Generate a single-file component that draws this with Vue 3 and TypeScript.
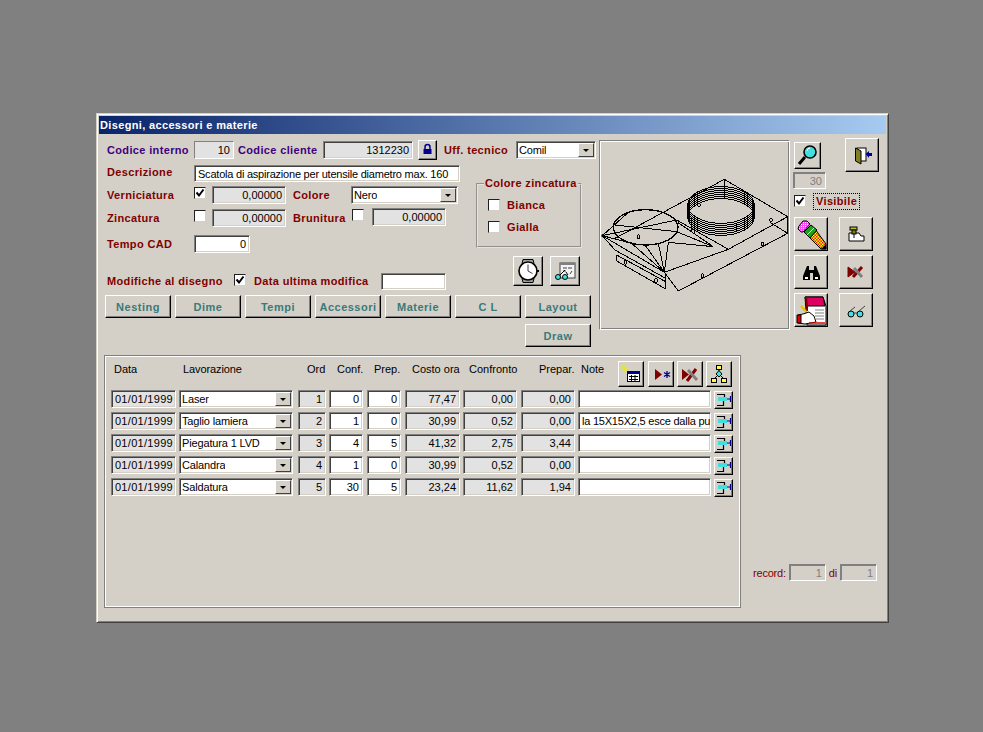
<script setup lang="ts">
interface Row {
  date: string
  work: string
  ord: number
  conf: number
  prep: number
  cost: string
  cmp: string
  prepar: string
  note: string
}
const rows: Row[] = [
  { date: '01/01/1999', work: 'Laser', ord: 1, conf: 0, prep: 0, cost: '77,47', cmp: '0,00', prepar: '0,00', note: '' },
  { date: '01/01/1999', work: 'Taglio lamiera', ord: 2, conf: 1, prep: 0, cost: '30,99', cmp: '0,52', prepar: '0,00', note: 'la 15X15X2,5 esce dalla pu' },
  { date: '01/01/1999', work: 'Piegatura 1 LVD', ord: 3, conf: 4, prep: 5, cost: '41,32', cmp: '2,75', prepar: '3,44', note: '' },
  { date: '01/01/1999', work: 'Calandra', ord: 4, conf: 1, prep: 0, cost: '30,99', cmp: '0,52', prepar: '0,00', note: '' },
  { date: '01/01/1999', work: 'Saldatura', ord: 5, conf: 30, prep: 5, cost: '23,24', cmp: '11,62', prepar: '1,94', note: '' },
]
const navButtons = ['Nesting', 'Dime', 'Tempi', 'Accessori', 'Materie', 'C L', 'Layout']
const ringYs = [210, 216, 222, 228, 234, 240, 246]
const holes: [number, number][] = [[130, 305], [312, 210], [528, 255], [502, 327], [322, 422], [183, 437], [92, 382]]
const wire: string[] = [
  'M388 133L578 245L400 343L245 255',
  'M388 133L60 310',
  'M578 245V295L250 468L208 412L400 343',
  'M525 262L578 295',
  'M22 302L100 232',
  'M22 302L60 345',
  'M22 302L208 412',
  'M22 302L245 255',
  'M22 302L110 325',
  'M60 270L245 290',
  'M208 412L110 325',
  'M208 412L150 330',
  'M208 412L190 325',
  'M208 412L220 322',
  'M220 322L355 335',
  'M245 290L355 335',
  'M248 262L355 335',
  'M60 345L212 430',
  'M65 360L212 440',
  'M65 360V378L212 462',
  'M212 415V462',
  'M388 133V190',
  'M425 265V292',
  'M290 250V290',
  'M298 255V295',
]
</script>

<template>
  <div class="window">
    <div class="title">Disegni, accessori e materie</div>
    <div class="top">
      <div class="form">
        <div class="row r1">
          <span class="lb blue w-int">Codice interno</span>
          <span class="f flat w40">10</span>
          <span class="lb blue w-cli">Codice cliente</span>
          <span class="f w90">1312230</span>
          <button class="btn lock" type="button">
            <svg viewBox="0 0 17 18" width="17" height="18"><path d="M6 8V6a2.500 2.500 0 0 1 5 0V8" fill="none" stroke="#000090" stroke-width="1.500"/><rect x="4.500" y="8" width="8" height="5" fill="#000090"/></svg>
          </button>
          <span class="lb red w-uff">Uff. tecnico</span>
          <span class="f white sel w80"><span class="val">Comil</span><i class="arrow"></i></span>
        </div>
        <div class="mid">
          <div class="mid-left">
            <div class="row r2">
              <span class="lb red w-lab lift">Descrizione</span>
              <span class="f white left w266">Scatola di aspirazione per utensile diametro max. 160</span>
            </div>
            <div class="row r3">
              <span class="lb red w-lab">Verniciatura</span>
              <span class="chk high"><svg viewBox="0 0 10 10" width="10" height="10"><path d="M1.500 4.500L4 7.500L8.500 1.500" fill="none" stroke="#000" stroke-width="2"/></svg></span>
              <span class="f w74 g-a">0,00000</span>
              <span class="lb red w-col">Colore</span>
              <span class="f white sel w107 tuck"><span class="val">Nero</span><i class="arrow"></i></span>
            </div>
            <div class="row r4">
              <span class="lb red w-lab">Zincatura</span>
              <span class="chk high"></span>
              <span class="f w74 g-a low">0,00000</span>
              <span class="lb red w-col">Brunitura</span>
              <span class="chk up"></span>
              <span class="f w74 g-b">0,00000</span>
            </div>
            <div class="row r5">
              <span class="lb red w-lab">Tempo CAD</span>
              <span class="f white w56">0</span>
            </div>
            <div class="row r6">
              <span class="lb red w-mod lift1">Modifiche al disegno</span>
              <span class="chk high"><svg viewBox="0 0 10 10" width="10" height="10"><path d="M1.500 4.500L4 7.500L8.500 1.500" fill="none" stroke="#000" stroke-width="2"/></svg></span>
              <span class="lb red w-dat lift1">Data ultima modifica</span>
              <span class="f white w65"></span>
            </div>
          </div>
          <div class="mid-right">
            <fieldset class="group">
              <legend class="lb red">Colore zincatura</legend>
              <div class="opt"><span class="chk"></span><span class="lb red">Bianca</span></div>
              <div class="opt"><span class="chk"></span><span class="lb red">Gialla</span></div>
            </fieldset>
            <div class="clock-row">
              <button class="btn b30" type="button">
                <svg viewBox="0 0 28 28" width="28" height="28">
                  <path d="M9 2.500h10l1 4H8zM9 25.500h10l1-4H8z" fill="#a0a0a0" stroke="#000"/>
                  <circle cx="14" cy="14" r="9" fill="#fff" stroke="#000" stroke-width="1.600"/>
                  <rect x="23" y="13" width="2" height="2" fill="#000"/>
                  <path d="M14 7.500V14L18.500 16.500" fill="none" stroke="#404040"/>
                </svg>
              </button>
              <button class="btn b30" type="button">
                <svg viewBox="0 0 28 28" width="28" height="28">
                  <rect x="9" y="6" width="15" height="15" fill="#f4f4f4" stroke="#404040"/>
                  <rect x="9" y="6" width="15" height="2" fill="#808080"/>
                  <path d="M12 11h4M17 11h4M12 14h3M19 17l2-3" stroke="#404040" fill="none"/>
                  <path d="M9 18l5-5M17 18l-2-3" stroke="#000" fill="none"/>
                  <circle cx="7" cy="20" r="2.500" fill="#40e0e0" stroke="#000"/>
                  <circle cx="14" cy="20" r="2.500" fill="#40e0e0" stroke="#000"/>
                </svg>
              </button>
            </div>
          </div>
        </div>
        <div class="nav">
          <button v-for="b in navButtons" :key="b" class="btn nav-btn" type="button">{{ b }}</button>
        </div>
        <div class="nav nav2">
          <button class="btn nav-btn" type="button">Draw</button>
        </div>
      </div>

      <div class="picture">
        <svg viewBox="12 15 573 570" width="191" height="190">
          <g fill="none" stroke="#000" stroke-width="3" shape-rendering="crispEdges">
            <path v-for="(d, i) in wire" :key="i" :d="d"/>
            <ellipse cx="152" cy="277" rx="97" ry="53" stroke-width="4"/>
            <ellipse v-for="y in ringYs" :key="y" cx="378" :cy="y" rx="100" ry="55"/>
            <ellipse v-for="h in holes" :key="h[0]" :cx="h[0]" :cy="h[1]" rx="4" ry="6"/>
          </g>
          <circle cx="24" cy="302" r="5" fill="#000"/>
        </svg>
      </div>

      <div class="tools">
        <div class="tool-head">
          <button class="btn b27" type="button">
            <svg viewBox="0 0 25 25" width="25" height="25">
              <path d="M10 14L4 21" stroke="#000" stroke-width="3"/>
              <circle cx="15" cy="9" r="6" fill="#40e0e0" stroke="#000" stroke-width="1.600"/>
              <path d="M12 8a3 3 0 0 1 3-3" stroke="#fff" fill="none"/>
            </svg>
          </button>
          <button class="btn b34" type="button">
            <svg viewBox="0 0 32 32" width="32" height="32">
              <rect x="11" y="9" width="9" height="13" fill="#fff" stroke="#000"/>
              <path d="M9.500 9L15 12V25L9.500 22z" fill="#808020" stroke="#000"/>
              <path d="M19.500 15L23 12V14H26V17H23V19z" fill="#000090"/>
            </svg>
          </button>
        </div>
        <span class="f flat w33 dis">30</span>
        <div class="vis-row">
          <span class="chk high"><svg viewBox="0 0 10 10" width="10" height="10"><path d="M1.500 4.500L4 7.500L8.500 1.500" fill="none" stroke="#000" stroke-width="2"/></svg></span>
          <span class="lb red vis">Visibile</span>
        </div>
        <div class="tool-grid">
          <button class="btn b34" type="button">
            <svg viewBox="0 0 32 32" width="32" height="32">
              <defs>
                <pattern id="chk" width="3" height="3" patternUnits="userSpaceOnUse"><rect width="3" height="3" fill="#ffff00"/><rect width="1.500" height="1.500" fill="#e02020"/><rect x="1.500" y="1.500" width="1.500" height="1.500" fill="#e02020"/></pattern>
                <pattern id="mag" width="2" height="2" patternUnits="userSpaceOnUse"><rect width="2" height="2" fill="#ff40ff"/><rect width="1" height="1" fill="#fff"/></pattern>
              </defs>
              <path d="M13 18L20 11L31 26V31H26z" fill="url(#chk)" stroke="#000"/>
              <path d="M9 14L16 7L22 12L15 20z" fill="#20a020" stroke="#000"/>
              <path d="M12 17L19 10" stroke="#ffff00"/>
              <path d="M4 8L8 3H12L15 6L8 14H6L3 11z" fill="url(#mag)" stroke="#000"/>
              <path d="M26 31L31 26V31z" fill="#000"/>
            </svg>
          </button>
          <button class="btn b34" type="button">
            <svg viewBox="0 0 32 32" width="32" height="32">
              <path d="M9 15H19L21 18H24V23H9z" fill="#fff" stroke="#000"/>
              <rect x="10" y="9" width="7" height="3" fill="#c0c020" stroke="#000"/>
              <rect x="12" y="12" width="4" height="4" fill="#808000" stroke="#000"/>
              <path d="M14 16V20" stroke="#000"/>
            </svg>
          </button>
          <button class="btn b34" type="button">
            <svg viewBox="0 0 32 32" width="32" height="32">
              <path d="M12 10H14V14H19V10H21L25 20V24H18V17H15V24H8V20z" fill="#000"/>
              <rect x="10" y="21" width="3" height="2" fill="#fff"/>
              <rect x="20" y="21" width="3" height="2" fill="#fff"/>
            </svg>
          </button>
          <button class="btn b34" type="button">
            <svg viewBox="0 0 32 32" width="32" height="32">
              <path d="M8 11L15 16L8 21z" fill="#800000" stroke="#800000"/>
              <path d="M13 21L22 11" stroke="#800000" stroke-width="3"/>
              <path d="M14 12L22 21" stroke="#808080" stroke-width="3"/>
            </svg>
          </button>
          <button class="btn b34" type="button">
            <svg viewBox="0 0 32 32" width="32" height="32">
              <path d="M10 3H28L31 12V31H12z" fill="#fff" stroke="#000"/>
              <path d="M10 3H28L30 12H12z" fill="#e00060" stroke="#000"/>
              <path d="M11 3L12 12V17" stroke="#800000" fill="none" stroke-width="2"/>
              <path d="M20 16H29M20 19H29M20 22H29M21 25H29" stroke="#808080"/>
              <path d="M6 12L16 23" stroke="#e0c000" stroke-width="2"/>
              <path d="M3 21L8 20L14 18L19 22L21 28L10 30L3 29z" fill="#fff" stroke="#000"/>
              <path d="M2 21H6V29H2z" fill="#e00000" stroke="#000"/>
              <path d="M14 29H30" stroke="#e00000" stroke-width="1.500"/>
            </svg>
          </button>
          <button class="btn b34" type="button">
            <svg viewBox="0 0 32 32" width="32" height="32">
              <circle cx="11" cy="20" r="3" fill="#40e0e0" stroke="#000"/>
              <circle cx="20" cy="20" r="3" fill="#40e0e0" stroke="#000"/>
              <path d="M14 19L17 19M10 17L15 13M19 17L25 12" fill="none" stroke="#404040"/>
            </svg>
          </button>
        </div>
      </div>
    </div>

    <div class="bottom">
      <div class="panel">
        <div class="head">
          <span class="hd h1">Data</span>
          <span class="hd h2">Lavorazione</span>
          <span class="hd h3">Ord</span>
          <span class="hd h4">Conf.</span>
          <span class="hd h5">Prep.</span>
          <span class="hd h6">Costo ora</span>
          <span class="hd h7">Confronto</span>
          <span class="hd h8">Prepar.</span>
          <span class="hd h9">Note</span>
          <div class="head-btns">
            <button class="btn b26" type="button">
              <svg viewBox="0 0 24 24" width="24" height="24">
                <path d="M6 2V12M1 7H11M3 4L9 10M9 4L3 10" stroke="#e8e820"/>
                <rect x="8.500" y="9.500" width="12" height="10" fill="#fff" stroke="#000"/>
                <rect x="8" y="9" width="13" height="3" fill="#000080"/>
                <path d="M10 14.500H19M10 17.500H19M12.500 13V20M16 13V20" stroke="#000"/>
              </svg>
            </button>
            <button class="btn b26" type="button">
              <svg viewBox="0 0 24 24" width="24" height="24">
                <path d="M6 7L13 12.500L6 18z" fill="#800000"/>
                <path d="M18 9V16M15 10.500L21 14.500M21 10.500L15 14.500" stroke="#000090" stroke-width="1.300"/>
              </svg>
            </button>
            <button class="btn b26 pull" type="button">
              <svg viewBox="0 0 24 24" width="24" height="24">
                <path d="M4 7L11 12.500L4 18z" fill="#800000"/>
                <path d="M9 19L18 7" stroke="#800000" stroke-width="3"/>
                <path d="M10 8L19 18" stroke="#808080" stroke-width="3"/>
              </svg>
            </button>
            <button class="btn b26 pull" type="button">
              <svg viewBox="0 0 24 24" width="24" height="24">
                <path d="M12 8V12M12 12L7 17M12 12L17 17" stroke="#000"/>
                <rect x="9.500" y="3.500" width="5" height="4" fill="#ffff40" stroke="#000"/>
                <path d="M12 8.500L15 12L12 15L9 12z" fill="#40e0e0" stroke="#000"/>
                <rect x="4.500" y="16.500" width="5" height="4" fill="#ffff40" stroke="#000"/>
                <rect x="14.500" y="16.500" width="5" height="4" fill="#ffff40" stroke="#000"/>
              </svg>
            </button>
          </div>
        </div>
        <div v-for="r in rows" :key="r.ord" class="grow">
          <span class="f c-date">{{ r.date }}</span>
          <span class="f white sel c-sel"><span class="val">{{ r.work }}</span><i class="arrow"></i></span>
          <span class="f c-ord">{{ r.ord }}</span>
          <span class="f white c-conf">{{ r.conf }}</span>
          <span class="f white c-prep">{{ r.prep }}</span>
          <span class="f c-cost">{{ r.cost }}</span>
          <span class="f c-cmp">{{ r.cmp }}</span>
          <span class="f c-par">{{ r.prepar }}</span>
          <span class="f white left c-note">{{ r.note }}</span>
          <button class="btn c-btn" type="button">
            <svg viewBox="0 0 17 16" width="17" height="16">
              <path d="M2 2.500H9.500V5M8.500 9V13.500H2" fill="none" stroke="#000" stroke-width="1.200"/>
              <rect x="3" y="5" width="9" height="4" fill="#40e0e0"/>
              <path d="M12 7H15.500M15.500 4V10" stroke="#000090" stroke-width="1.200"/>
            </svg>
          </button>
        </div>
      </div>
      <div class="record">
        <span class="rec-l">record:</span>
        <span class="f flat dis w37">1</span>
        <span class="rec-l">di</span>
        <span class="f flat dis w37">1</span>
      </div>
    </div>
  </div>
</template>

<style>
html, body { margin: 0; background: #808080; }
</style>

<style scoped>
.window {
  box-sizing: border-box;
  width: 793px;
  height: 510px;
  margin: 113px 0 0 96px;
  background: #d4d0c8;
  border: 1px solid;
  border-color: #d4d0c8 #404040 #404040 #d4d0c8;
  box-shadow: inset 1px 1px 0 #fff, inset -1px -1px 0 #808080;
  font: 11px "Liberation Sans", Arial, sans-serif;
  color: #000;
  display: flex;
  flex-direction: column;
  padding: 2px;
}
.title {
  height: 18px;
  line-height: 18px;
  padding-left: 1px;
  font-weight: 700;
  letter-spacing: 0.35px;
  color: #fff;
  background: linear-gradient(90deg, #0a246a, #a6caf0);
}
.top { display: flex; height: 221px; padding: 4px 0 0 6px; box-sizing: border-box; }
.form { width: 494px; flex: none; }
.row { display: flex; align-items: center; }
.lb { font-weight: 700; letter-spacing: 0.35px; white-space: nowrap; }
.blue { color: #400080; }
.red { color: #800000; }
.r1 { height: 20px; margin-top: 2px; }
.w-int { width: 87px; padding-left: 2px; box-sizing: content-box; }
.w-cli { width: 81px; margin-left: 4px; margin-right: 4px; }
.w-uff { width: 72px; margin-left: 7px; }
.w-lab { width: 87px; padding-left: 2px; }
.w-col { width: 59px; margin-left: 7px; }
.w-mod { width: 127px; padding-left: 2px; }
.w-dat { width: 127px; margin-left: 8px; }
.lift { margin-top: -4px; }
.lift1 { margin-top: -2px; }
.tuck { margin-left: -1px; }
.high { margin-top: -4px; }
.f {
  box-sizing: border-box;
  display: block;
  height: 18px;
  line-height: 16px;
  padding: 0 3px;
  text-align: right;
  white-space: nowrap;
  overflow: hidden;
  background: #e2e2e2;
  border: 1px solid;
  border-color: #808080 #fff #fff #808080;
  box-shadow: inset 1px 1px 0 #404040, inset -1px -1px 0 #d4d0c8;
  flex: none;
}
.flat { box-shadow: none; }
.white { background: #fff; }
.left { text-align: left; letter-spacing: -0.22px; }
.dis { color: #808080; background: #d4d0c8; }
.w33 { width: 33px; height: 17px; box-shadow: inset 1px 1px 0 #808080; }
.w37 { width: 37px; height: 17px; box-shadow: inset 1px 1px 0 #808080; }
.w40 { width: 40px; }
.w56 { width: 56px; }
.w65 { width: 65px; height: 17px; }
.w74 { width: 74px; }
.w80 { width: 80px; }
.w90 { width: 90px; }
.w107 { width: 107px; }
.w266 { width: 266px; height: 17px; }
.sel { display: flex; align-items: center; justify-content: space-between; padding: 0 1px 0 2px; text-align: left; }
.val { overflow: hidden; letter-spacing: -0.15px; }
.arrow {
  width: 16px;
  height: 14px;
  box-sizing: border-box;
  background: #d4d0c8;
  border: 1px solid;
  border-color: #fff #404040 #404040 #fff;
  display: flex;
  align-items: center;
  justify-content: center;
  flex: none;
}
.arrow::after {
  content: "";
  border: 3px solid transparent;
  border-top: 3px solid #000;
  border-bottom: 0;
}
.btn {
  box-sizing: border-box;
  padding: 0;
  margin: 0;
  background: #d4d0c8;
  border: 1px solid;
  border-color: #fff #000 #000 #fff;
  box-shadow: inset -1px -1px 0 #808080;
  display: flex;
  align-items: center;
  justify-content: center;
  flex: none;
  overflow: hidden;
}
.lock { width: 19px; height: 20px; margin-left: 5px; }
.mid { display: flex; height: 125px; margin-top: 5px; }
.mid-left { width: 371px; flex: none; }
.r2 { height: 17px; }
.r3 { height: 18px; margin-top: 4px; }
.r4 { height: 19px; margin-top: 4px; }
.r5 { height: 18px; margin-top: 8px; }
.r6 { height: 17px; margin-top: 20px; }
.chk {
  box-sizing: border-box;
  width: 12px;
  height: 12px;
  background: #fff;
  border: 1px solid;
  border-color: #202020 #d4d0c8 #d4d0c8 #202020;
  flex: none;
  display: flex;
  align-items: center;
  justify-content: center;
}
.chk.up { margin-top: -6px; }
.g-a { margin-left: 6px; }
.low { margin-top: 1px; }
.g-b { margin-left: 8px; margin-top: -1px; }
.mid-right { flex: 1; padding-top: 12px; min-width: 0; }
.group {
  box-sizing: border-box;
  width: 106px;
  min-width: 0;
  height: 71px;
  margin: 0;
  padding: 9px 0 0 0;
  border: 2px groove #e8e4dc;
}
.group legend { padding: 0 1px; margin-left: 6px; line-height: 13px; }
.opt { display: flex; align-items: center; gap: 7px; height: 12px; margin: 0 0 10px 10px; }
.clock-row { display: flex; gap: 7px; margin: 8px 0 0 37px; }
.b30 { width: 30px; height: 30px; }
.b27 { width: 27px; height: 27px; }
.b34 { width: 34px; height: 34px; }
.b26 { width: 26px; height: 26px; }
.nav { display: flex; gap: 4px; margin-top: 5px; }
.nav-btn {
  width: 66px;
  height: 23px;
  font: 700 11px "Liberation Sans", Arial, sans-serif;
  letter-spacing: 0.5px;
  color: #3a7a7a;
}
.nav2 { justify-content: flex-end; width: 486px; margin-top: 6px; }
.picture {
  box-sizing: border-box;
  width: 191px;
  height: 190px;
  margin-top: 2px;
  flex: none;
  border: 1px solid;
  border-color: #808080 #fff #fff #808080;
  box-shadow: inset 1px 1px 0 #fff, inset -1px -1px 0 #808080;
  overflow: hidden;
}
.picture svg { display: block; margin: -1px; }
.tools { margin-left: 4px; width: 86px; flex: none; }
.tool-head { display: flex; align-items: flex-start; height: 34px; }
.tool-head .b27 { margin: 4px 0 0 0; }
.tool-head .b34 { margin-left: 24px; }
.tools > .w33 { margin: 0 0 0 -1px; }
.vis-row { display: flex; align-items: center; height: 17px; margin-top: 4px; }
.vis-row .high { margin-top: -2px; }
.vis { margin-left: 7px; padding: 0 2px; line-height: 15px; border: 1px dotted #000; }
.tool-grid {
  display: grid;
  grid-template-columns: 34px 34px;
  column-gap: 11px;
  row-gap: 4px;
  margin-top: 7px;
}
.bottom { display: flex; align-items: flex-start; padding-left: 5px; }
.panel {
  box-sizing: border-box;
  width: 637px;
  height: 253px;
  flex: none;
  border: 1px solid #808080;
  box-shadow: inset 1px 1px 0 #fff, inset -1px -1px 0 #fff;
  padding: 5px 0 0 6px;
}
.head { display: flex; height: 29px; }
.hd { line-height: 13px; margin-top: 2px; white-space: nowrap; }
.h1 { margin-left: 3px; width: 69px; }
.h2 { width: 124px; letter-spacing: -0.1px; }
.h3 { width: 30px; }
.h4 { width: 37px; }
.h5 { width: 38px; }
.h6 { width: 57px; }
.h7 { width: 70px; }
.h8 { width: 42px; }
.h9 { width: 37px; }
.head-btns { display: flex; gap: 4px; }
.pull { margin-left: -1px; }
.grow { display: flex; height: 22px; }
.c-date { width: 65px; letter-spacing: 0.3px; padding: 0 2px; }
.c-sel { width: 114px; margin-left: 3px; }
.c-ord { width: 28px; margin-left: 5px; background: #e0e0e0; }
.c-conf { width: 34px; margin-left: 3px; }
.c-prep { width: 34px; margin-left: 4px; }
.c-cost { width: 55px; margin-left: 4px; }
.c-cmp { width: 54px; margin-left: 3px; }
.c-par { width: 54px; margin-left: 4px; }
.c-note { width: 133px; margin-left: 3px; }
.c-btn { width: 19px; height: 18px; margin: 1px 0 0 3px; }
.record { display: flex; align-items: center; gap: 3px; margin: 209px 0 0 12px; color: #800000; }
.rec-l { letter-spacing: -0.2px; }
</style>
